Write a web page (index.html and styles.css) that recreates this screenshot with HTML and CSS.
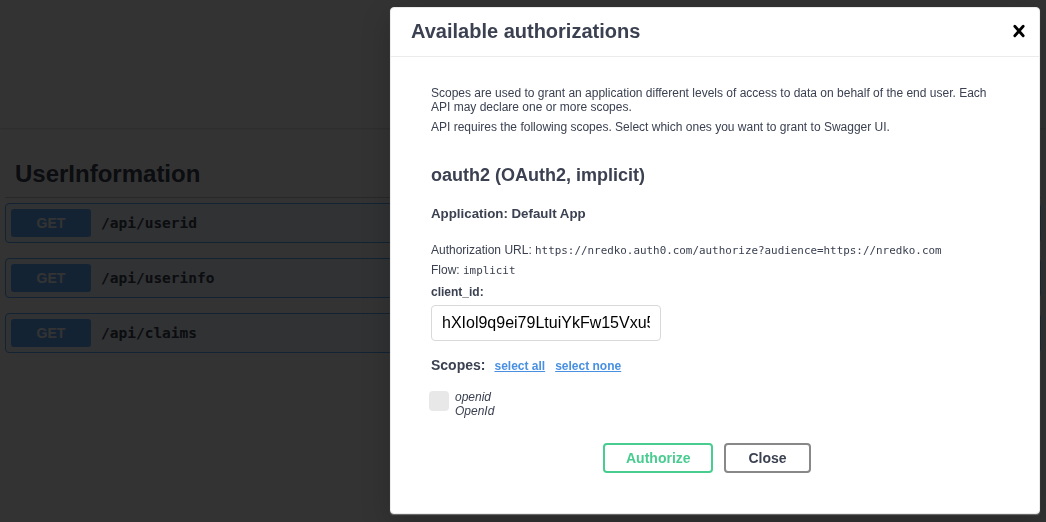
FILE: index.html
```html
<!DOCTYPE html>
<html lang="en">
<head>
<meta charset="utf-8">
<title>Swagger UI</title>
<link rel="stylesheet" href="styles.css">
</head>
<body>
<div class="page">
  <div class="scheme-container"></div>
  <div class="tag-section">
    <h3 class="opblock-tag">UserInformation</h3>
    <div class="opblock">
      <span class="method">GET</span>
      <span class="path">/api/userid</span>
    </div>
    <div class="opblock">
      <span class="method">GET</span>
      <span class="path">/api/userinfo</span>
    </div>
    <div class="opblock">
      <span class="method">GET</span>
      <span class="path">/api/claims</span>
    </div>
  </div>
</div>

<div class="backdrop"></div>

<div class="modal">
  <div class="modal-header">
    <h3 class="modal-title">Available authorizations</h3>
    <button class="close-modal" type="button" aria-label="Close">
      <svg width="24" height="24" viewBox="0 0 20 20"><path d="M14.348 14.849a1.2 1.2 0 0 1-1.697 0L10 11.819l-2.651 3.029a1.2 1.2 0 1 1-1.697-1.697l2.758-3.15-2.759-3.152a1.2 1.2 0 1 1 1.697-1.697L10 8.183l2.651-3.031a1.2 1.2 0 1 1 1.697 1.697l-2.758 3.152 2.758 3.15a1.2 1.2 0 0 1 0 1.698z"/></svg>
    </button>
  </div>
  <div class="modal-body">
    <div class="auth-container">
      <p class="desc">Scopes are used to grant an application different levels of access to data on behalf of the end user. Each API may declare one or more scopes.</p>
      <p class="req">API requires the following scopes. Select which ones you want to grant to Swagger UI.</p>
      <h4 class="scheme-title">oauth2 (OAuth2, implicit)</h4>
      <h6 class="app">Application: Default App</h6>
      <p class="info">Authorization URL: <code>https://nredko.auth0.com/authorize?audience=https://nredko.com</code></p>
      <p class="info flow">Flow: <code>implicit</code></p>
      <label class="field-label" for="client_id">client_id:</label>
      <input id="client_id" class="text-input" type="text" value="hXIol9q9ei79LtuiYkFw15Vxu5dQ">
      <div class="scopes-row">
        <span class="scopes-label">Scopes:</span>
        <a class="scope-link" href="#">select all</a>
        <a class="scope-link" href="#">select none</a>
      </div>
      <div class="scope-item">
        <span class="checkbox"></span>
        <div class="scope-text">
          <span>openid</span>
          <span>OpenId</span>
        </div>
      </div>
      <div class="btn-wrapper">
        <button class="btn btn-auth" type="button">Authorize</button>
        <button class="btn btn-close" type="button">Close</button>
      </div>
    </div>
  </div>
</div>
</body>
</html>
```

FILE: styles.css
```css
* { box-sizing: border-box; }

html, body {
  margin: 0;
  padding: 0;
  background: #fff;
  font-family: "Liberation Sans", Arial, sans-serif;
  color: #3b4151;
  overflow: hidden;
}

.page {
  width: 1046px;
  height: 522px;
}

.scheme-container {
  height: 128px;
  background: #fff;
  box-shadow: 0 1px 2px 0 rgba(0, 0, 0, 0.15);
}

.tag-section {
  padding: 22px 5px 0 5px;
}

.opblock-tag {
  margin: 0 0 5px;
  padding: 10px 20px 10px 10px;
  font-size: 24px;
  line-height: 27px;
  font-weight: 700;
  border-bottom: 1px solid rgba(59, 65, 81, 0.3);
}

.opblock {
  display: flex;
  align-items: center;
  height: 40px;
  margin-bottom: 15px;
  padding: 0 5px;
  border: 1px solid #61affe;
  border-radius: 4px;
  background: rgba(97, 175, 254, 0.1);
}

.method {
  width: 80px;
  height: 28px;
  line-height: 28px;
  text-align: center;
  background: #61affe;
  color: #fff;
  font-weight: 700;
  font-size: 14px;
  border-radius: 3px;
}

.path {
  margin-left: 10px;
  font-family: "DejaVu Sans Mono", monospace;
  font-weight: 700;
  font-size: 14.5px;
  color: #3b4151;
}

.backdrop {
  position: fixed;
  inset: 0;
  background: rgba(0, 0, 0, 0.8);
}

.modal {
  position: absolute;
  left: 390px;
  top: 7px;
  width: 650px;
  background: #fff;
  border: 1px solid #ebebeb;
  border-radius: 4px;
  box-shadow: 0 1px 1px 0 rgba(120, 120, 120, 0.9), 0 10px 30px 0 rgba(0, 0, 0, 0.2);
}

.modal-header {
  display: flex;
  align-items: center;
  justify-content: space-between;
  height: 49px;
  padding: 0 8px 0 20px;
  border-bottom: 1px solid #ebebeb;
}

.modal-title {
  margin: 0 0 2px;
  font-size: 20px;
  line-height: 24px;
  font-weight: 700;
  color: #3b4151;
}

.close-modal {
  display: flex;
  padding: 0;
  margin-bottom: 3px;
  border: 0;
  background: none;
}

.close-modal svg { fill: #000; }

.modal-body {
  padding: 29px 20px 40px 20px;
}

.auth-container {
  padding: 0 20px;
}

.desc, .req {
  margin: 0;
  font-size: 12px;
  line-height: 14px;
}

.req { margin-top: 6px; }

.scheme-title {
  margin: 31px 0 0;
  font-size: 18px;
  line-height: 20px;
  font-weight: 700;
}

.app {
  margin: 21px 0 0;
  font-size: 13.3px;
  line-height: 16px;
  font-weight: 700;
}

.info {
  margin: 20px 0 0;
  font-size: 12px;
  line-height: 16px;
}

.info.flow { margin-top: 3px; }

.info code {
  font-family: "DejaVu Sans Mono", monospace;
  font-size: 10.9px;
}

.field-label {
  display: block;
  margin-top: 5px;
  font-size: 12px;
  line-height: 16px;
  font-weight: 700;
}

.text-input {
  display: block;
  width: 230px;
  height: 36px;
  margin-top: 5px;
  padding: 8px 10px;
  border: 1px solid #d9d9d9;
  border-radius: 4px;
  background: #fff;
  font-family: "Liberation Sans", Arial, sans-serif;
  font-size: 16px;
  color: #000;
  outline: none;
}

.scopes-row {
  display: flex;
  align-items: baseline;
  margin-top: 15px;
  line-height: 18px;
}

.scopes-label {
  font-size: 14px;
  font-weight: 700;
  margin-right: 9px;
}

.scope-link {
  font-size: 12px;
  font-weight: 700;
  color: #4990e2;
  text-decoration: underline;
  margin-right: 10px;
}

.scope-item {
  display: flex;
  align-items: flex-start;
  margin-top: 15px;
}

.checkbox {
  width: 20px;
  height: 20px;
  margin: 1px 6px 0 -2px;
  background: #e8e8e8;
  border-radius: 4px;
}

.scope-text {
  display: flex;
  flex-direction: column;
  font-size: 12px;
  line-height: 14px;
  font-style: italic;
}

.btn-wrapper {
  display: flex;
  justify-content: center;
  gap: 11px;
  margin-top: 25px;
  padding-right: 16px;
}

.btn {
  height: 30px;
  padding: 0 21px;
  border: 2px solid #888;
  border-radius: 4px;
  background: transparent;
  font-family: "Liberation Sans", Arial, sans-serif;
  font-size: 14px;
  font-weight: 700;
  color: #3b4151;
}

.btn-auth {
  width: 110px;
  border-color: #49cc90;
  color: #49cc90;
}

.btn-close {
  width: 87px;
}
```
